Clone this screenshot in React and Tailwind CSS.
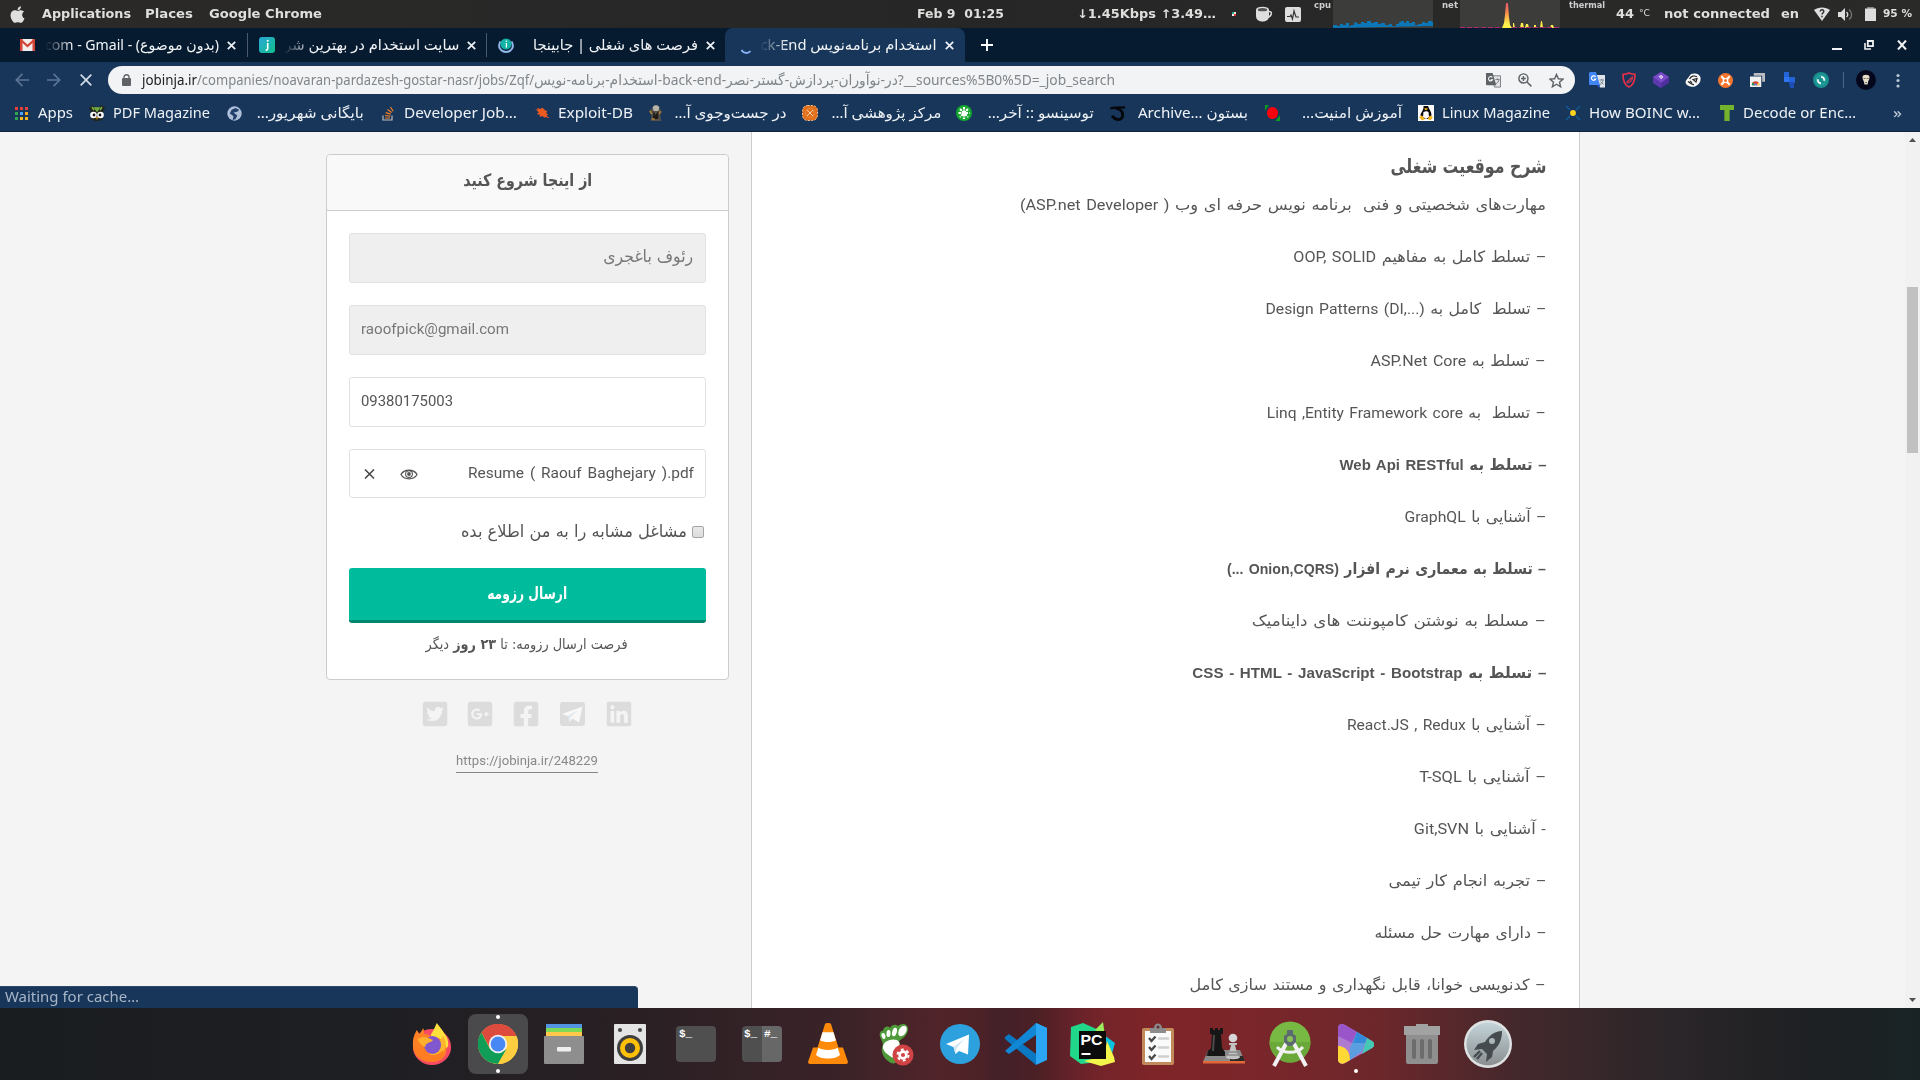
import { useLayoutEffect, useRef } from "react";
import { FaApple, FaTwitterSquare, FaGooglePlusSquare, FaFacebookSquare, FaLinkedin } from "react-icons/fa";

// Single-line label that is squeezed or stretched to the width of its box.
function Fit({ className = "", rtl = false, children }) {
  const box = useRef(null);
  const text = useRef(null);
  useLayoutEffect(() => {
    const natural = text.current.getBoundingClientRect().width;
    if (natural) text.current.style.transform = `scaleX(${box.current.clientWidth / natural})`;
  }, []);
  return (
    <div ref={box} dir={rtl ? "rtl" : "ltr"} className={`flex shrink-0 items-center ${className}`}>
      <span ref={text} className={rtl ? "block shrink-0 whitespace-pre origin-right" : "block shrink-0 whitespace-pre origin-left"}>
        {children}
      </span>
    </div>
  );
}

function Svg({ className, box = "0 0 16 16", children }) {
  return (
    <svg viewBox={box} preserveAspectRatio="none" fill="none" className={`block shrink-0 ${className}`}>
      {children}
    </svg>
  );
}

/* ---------- desktop panel ---------- */

const cpuPath =
  "M0 28V25h4v1h3v-2h3v1h3v-2h3v3h2v-1h3v-2l2-1 2 2h3v-2h3v1h3v-2h4v2h3v-1h4v2h3v-1h4v2h4v-1h3v2h4v-2h3v-2h2v-1h3v2h2v-2h3v2h3v-1h3v3h3v-1h4v-2h3v1h3v-2h4v1h2v2h3v2z";

function TopPanel() {
  return (
    <div className="flex h-7 shrink-0 items-center bg-gradient-to-r from-[#2b2a29] via-[#262626] to-[#2a2b29] text-[12px] font-bold text-[#dfdfdd]">
      <FaApple className="ml-[8px] h-[19px] w-[19px]" />
      <Fit className="ml-[15px] w-[89px]">Applications</Fit>
      <Fit className="ml-[14px] w-[48px]">Places</Fit>
      <Fit className="ml-[16px] w-[113px]">Google Chrome</Fit>
      <Fit className="ml-[595px] w-[87px]">Feb 9  01:25</Fit>
      <Fit className="ml-[73px] w-[139px]">↓1.45Kbps ↑3.49…</Fit>
      <Svg className="ml-[16px] h-1 w-1" box="0 0 4 4">
        <path d="M0 0h2v2H0z" fill="#2a8" /><path d="M2 0h2v2H2z" fill="#e8e8e8" /><path d="M2 2h2v2H2z" fill="#d33" /><path d="M0 2h2v2H0z" fill="#eee" />
      </Svg>
      <Svg className="ml-[19px] h-[16px] w-[18px]" box="0 0 18 16">
        <path d="M1 4h13v6c0 3-2 5.500-6.500 5.500S1 13 1 10z" fill="#dedede" />
        <ellipse cx="7.500" cy="3.500" rx="6.500" ry="2.800" fill="#dedede" />
        <ellipse cx="7.500" cy="3.700" rx="4.700" ry="1.600" fill="#555" />
        <path d="M13.500 5.500c4-.5 4 4-.8 6" stroke="#dedede" strokeWidth="1.500" />
      </Svg>
      <Svg className="ml-[12px] h-[15px] w-[16px]" box="0 0 16 15">
        <rect width="16" height="15" rx="2" fill="#dedede" />
        <path d="M2 9.500h3l1-1.500 1.500 4L9 4l2 6h3" stroke="#333" strokeWidth="1.200" />
      </Svg>
      <Fit className="ml-[13px] h-[10px] w-[17px] self-start text-[8.500px] text-[#cfcfcf]">cpu</Fit>
      <div className="ml-[2px] h-7 w-[100px] bg-[#3c3c3b]">
        <Svg className="h-7 w-[100px]" box="0 0 100 28"><path d={cpuPath} fill="#0b76b8" /></Svg>
      </div>
      <Fit className="ml-[9px] h-[10px] w-[16px] self-start text-[8.500px] text-[#cfcfcf]">net</Fit>
      <div className="ml-[2px] h-7 w-[100px] bg-[#3c3c3b]">
        <Svg className="h-7 w-[100px]" box="0 0 100 28">
          <defs>
            <linearGradient id="net" x1="0" y1="0" x2="0" y2="28" gradientUnits="userSpaceOnUse">
              <stop offset="0" stopColor="#d8437a" /><stop offset=".45" stopColor="#f98a4a" /><stop offset=".85" stopColor="#fdf04a" /><stop offset="1" stopColor="#fdf04a" />
            </linearGradient>
          </defs>
          <path d="M42 28l2-5 1-8 1-12h2l1 14 1 8 2 3zM53 28v-5h1l1 5zM60 28l1-5h2l1 5zM65 28l1-4h2l1 4zM74 28v-3h2v3zM80 28l1-7h1l1 7zM90 28l1-3h2l1 3z" fill="url(#net)" />
          <path d="M0 27.500h42M52 27.500h48" stroke="#b0296f" strokeWidth="1" strokeDasharray="5 2" />
        </Svg>
      </div>
      <Fit className="ml-[9px] h-[10px] w-[36px] self-start text-[8.500px] text-[#cfcfcf]">thermal</Fit>
      <Fit className="ml-[11px] w-[18px]">44</Fit>
      <Fit className="ml-[5px] w-[11px] text-[9px] font-normal">°C</Fit>
      <Fit className="ml-[14px] w-[106px]">not connected</Fit>
      <Fit className="ml-[11px] w-[18px]">en</Fit>
      <Svg className="ml-[15px] h-[14px] w-[16px]" box="0 0 16 14">
        <path d="M0 3C4-.5 12-.5 16 3L8 14z" fill="#dedede" />
        <path d="M6.200 4.500c0-2.400 3.800-2.200 3.600 0C9.700 6 8 6 8 7.500M8 8.700v1.600" stroke="#2a2a2a" strokeWidth="1.400" />
      </Svg>
      <Svg className="ml-[8px] h-[15px] w-[16px]" box="0 0 16 15">
        <path d="M0 5h3l4-4v13l-4-4H0z" fill="#dedede" />
        <path d="M8.500 5c1.500 1.500 1.500 3.500 0 5" stroke="#dedede" strokeWidth="1.300" />
        <path d="M11 2.500c3.500 2.500 3.500 7.500 0 10" stroke="#777" strokeWidth="1.300" />
      </Svg>
      <Svg className="ml-[11px] h-[14px] w-[11px]" box="0 0 11 14">
        <path d="M2.500 0h6v1.500H11V14H0V1.500h2.500z" fill="#dedede" /><path d="M2.500 0h6v1.500h-6z" fill="#888" />
      </Svg>
      <Fit className="ml-[7px] w-[29px] text-[11px]">95 %</Fit>
    </div>
  );
}

/* ---------- browser chrome ---------- */

function CloseX({ className }) {
  return (
    <Svg className={`h-[9px] w-[9px] ${className}`} box="0 0 9 9">
      <path d="M.8.8l7.400 7.400M8.200.8L.8 8.200" stroke="#eef2f6" strokeWidth="1.700" />
    </Svg>
  );
}

const fadeLeft = "[mask-image:linear-gradient(to_right,transparent_0,#000_28px)]";

function TabStrip() {
  return (
    <div className="flex h-[34px] shrink-0 items-center bg-[#071b30] text-[14.500px] text-[#f2f5f8]">
      <div className="flex h-full w-[239px] items-center pl-[20px]">
        <Svg className="h-3 w-[15px]" box="0 0 15 12">
          <rect width="15" height="12" rx="1" fill="#f3eeee" />
          <path d="M0 0h2.500v12H1a1 1 0 01-1-1zM15 0h-2.500v12H14a1 1 0 001-1z" fill="#d54337" />
          <path d="M.8 1l6.700 6 6.700-6" stroke="#d54337" strokeWidth="2.200" />
        </Svg>
        <div className={`ml-[10px] ${fadeLeft}`}><Fit className="w-[174px]">com - Gmail - (بدون موضوع)</Fit></div>
        <CloseX className="ml-[8px]" />
      </div>
      <div className="ml-[8px] h-6 w-px bg-[#4a5a6c]" />
      <div className="flex h-full w-[238px] items-center pl-[11px]">
        <Svg className="h-4 w-4">
          <defs><linearGradient id="jt" x1="0" y1="0" x2="16" y2="16" gradientUnits="userSpaceOnUse"><stop stopColor="#2aa7d8" /><stop offset="1" stopColor="#0fc08b" /></linearGradient></defs>
          <rect width="16" height="16" rx="3" fill="url(#jt)" />
          <path d="M8.700 6v5.500c0 1.200-.7 1.700-2 1.600" stroke="#fff" strokeWidth="1.600" /><circle cx="8.700" cy="3.800" r="1" fill="#fff" />
        </Svg>
        <div className={`ml-[9px] ${fadeLeft}`}><Fit rtl className="w-[175px]">سایت استخدام در بهترین شر</Fit></div>
        <CloseX className="ml-[8px]" />
      </div>
      <div className="h-6 w-px bg-[#4a5a6c]" />
      <div className="flex h-full w-[238px] items-center pl-[11px]">
        <Svg className="h-4 w-4">
          <path d="M2.500 4.500C-1 10 3 15 8 15s9-5 5.500-10.500" stroke="#8fb6ea" strokeWidth="2" />
          <circle cx="8" cy="7" r="5.600" fill="#12b3a6" />
          <path d="M8.400 6v4.500" stroke="#fff" strokeWidth="1.300" /><circle cx="8.400" cy="4.200" r=".8" fill="#fff" />
        </Svg>
        <Fit rtl className="ml-[19px] w-[165px]">فرصت های شغلی | جابینجا</Fit>
        <CloseX className="ml-[8px]" />
      </div>
      <div className="flex h-full w-[240px] items-center rounded-t-lg bg-[#18365a] pl-[16px]">
        <Svg className="mt-[12px] h-[5px] w-[10px]" box="0 0 10 5"><path d="M.5 1c2 3.500 6.500 4 9 1" stroke="#8ab4f8" strokeWidth="1.800" /></Svg>
        <div className={`ml-[9px] ${fadeLeft}`}><Fit rtl className="w-[176px]">استخدام برنامه‌نویس ck-End</Fit></div>
        <CloseX className="ml-[9px]" />
      </div>
      <Svg className="ml-[16px] h-3 w-3" box="0 0 12 12"><path d="M6 0v12M0 6h12" stroke="#fff" strokeWidth="1.900" /></Svg>
      <Svg className="mt-[8px] ml-[839px] h-[2px] w-[10px]" box="0 0 10 2"><path d="M0 0h10v2H0z" fill="#f2f2f2" /></Svg>
      <Svg className="ml-[22px] h-[10px] w-[10px]" box="0 0 10 10">
        <path d="M1 3v6h6" stroke="#f2f2f2" strokeWidth="1.600" /><path d="M3.800 1h5.200v5.200H3.800z" stroke="#f2f2f2" strokeWidth="1.800" />
      </Svg>
      <Svg className="ml-[23px] h-[10px] w-[10px]" box="0 0 10 10"><path d="M1 .5l8 9M9 .5l-8 9" stroke="#f2f2f2" strokeWidth="2" /></Svg>
    </div>
  );
}

function AddressRow() {
  return (
    <div className="flex h-9 shrink-0 items-center bg-[#18365a]">
      <Svg className="ml-[15px] h-[14px] w-[14px]"><path d="M16 8H2M8.500 1L1.500 8l7 7" stroke="#5c7596" strokeWidth="1.900" /></Svg>
      <Svg className="ml-[18px] h-[14px] w-[14px]"><path d="M0 8h14M7.500 1l7 7-7 7" stroke="#5c7596" strokeWidth="1.900" /></Svg>
      <Svg className="ml-[19px] h-[12px] w-[12px]" box="0 0 12 12"><path d="M.7.7l10.600 10.600M11.300.7L.7 11.300" stroke="#d4dce6" strokeWidth="1.700" /></Svg>
      <div className="ml-[16px] flex h-7 w-[1467px] items-center rounded-full bg-[#f1f3f4] text-[14.500px]">
        <Svg className="ml-[14px] h-[12px] w-[9px]" box="0 0 9 12">
          <rect y="4" width="9" height="8" rx="1" fill="#5f6368" /><path d="M2 4.500V3c0-3 5-3 5 0v1.500" stroke="#5f6368" strokeWidth="1.300" />
        </Svg>
        <Fit className="ml-[11px] w-[55px] text-[#202124]">jobinja.ir</Fit>
        <Fit className="w-[337px] text-[#80868b]">/companies/noavaran-pardazesh-gostar-nasr/jobs/Zqf/</Fit>
        <Fit className="w-[581px] text-[#80868b]">استخدام-برنامه-نویس-back-end-در-نوآوران-پردازش-گستر-نصر?__sources%5B0%5D=_job_search</Fit>
        <Svg className="ml-[371px] h-[15px] w-[15px]">
          <path d="M7 3h8.500v12H9z" fill="#e4e6e8" stroke="#777c82" />
          <path d="M0 0h7l4 13H1a1 1 0 01-1-1z" fill="#5f6368" />
          <path d="M6.800 4.700A2.300 2.300 0 107 7.300H5" stroke="#fff" strokeWidth="1.100" />
          <path d="M10 7h4.500M12.300 5.500V7M13.800 7c0 2-1.500 3.500-3 4.500" stroke="#777c82" />
        </Svg>
        <Svg className="ml-[17px] h-[14px] w-[14px]">
          <circle cx="6.200" cy="6.200" r="5.200" stroke="#5f6368" strokeWidth="1.700" /><path d="M10 10l5.300 5.300M3.500 6.200H9M6.200 3.500V9" stroke="#5f6368" strokeWidth="1.700" />
        </Svg>
        <Svg className="ml-[17px] h-[15px] w-[15px]">
          <path d="M8 1.500l2 4.600 5 .4-3.800 3.300 1.200 4.900L8 12l-4.400 2.700 1.200-4.900L1 6.500l5-.4z" stroke="#5f6368" strokeWidth="1.500" />
        </Svg>
      </div>
      <Svg className="ml-[14px] h-4 w-4">
        <path d="M7 3h9v12.500h-5z" fill="#dfe4ea" /><path d="M1 0h6l4 13H1a1 1 0 01-1-1V1z" fill="#4285f4" /><path d="M8 13h3l-1 3z" fill="#2a56c6" />
        <path d="M6.500 4.800A2.200 2.200 0 106.700 7H5" stroke="#fff" strokeWidth="1.200" /><path d="M10.500 8H15M12.700 7v1M14 8c0 2-1.500 3.500-3 4.500M11.500 9.500l3 3" stroke="#7d8894" />
      </Svg>
      <Svg className="ml-[17px] h-4 w-[14px]" box="0 0 14 16">
        <path d="M7 1c2 1 4 1.400 6 1.400C13 9 11.500 13 7 15 2.500 13 1 9 1 2.400 3 2.400 5 2 7 1z" stroke="#e5304b" strokeWidth="1.700" /><path d="M4.500 10.500L11 4.500M5 11c3-.5 5-2.500 5.500-5" stroke="#e5304b" strokeWidth="1.100" />
      </Svg>
      <Svg className="ml-[17px] h-4 w-4">
        <path d="M8 0l8 5v6l-8 5-8-5V5z" fill="#4f2d9c" /><path d="M8 0l8 5-8 6-8-6z" fill="#7a4bc8" /><path d="M8 11v5l-8-5V5z" fill="#5e38ad" /><path d="M6 4.500l2-1 2 1.500-2 1.500zM8 3.500V6.500" stroke="#e9defa" />
      </Svg>
      <Svg className="ml-[16px] h-[15px] w-4">
        <path d="M6 1c4-1.500 9 0 9.500 4 .5 4-1 7-5 9-3 1.500-5 .5-7-.5S0 11 1 8z" fill="#f6f6f6" /><path d="M4.500 6.500C6 3 9 2.500 12 4M3 9c2 2 4 3.500 6 3.500M8 7l4-1-1 3.500zM5 8.500l2 2" stroke="#222" strokeWidth="1.200" />
      </Svg>
      <Svg className="ml-[17px] h-[15px] w-[15px]">
        <circle cx="8" cy="8" r="8" fill="#f4742b" /><path d="M3.500 3.500l9 9M12.500 3.500l-9 9" stroke="#fff" strokeWidth="2.200" /><path d="M5 5.500h6v5H5z" fill="#fff" /><circle cx="8" cy="8" r="1.600" fill="#f4742b" />
      </Svg>
      <Svg className="ml-[17px] h-[14px] w-[15px]">
        <path d="M4 0h12v10h-3V3H4z" fill="#b9bdc2" /><path d="M0 4h12v12H0z" fill="#f1f1f1" />
        <path d="M2 14a4 4.500 0 018 0z" fill="#db4437" /><path d="M2 14c0-2 .5-3 1-3.500l2 3.500z" fill="#0f9d58" /><path d="M10 14c0-2-.5-3-1-3.500L7 14z" fill="#ffcd40" /><path d="M4.500 14a1.500 2 0 013 0z" fill="#4285f4" />
      </Svg>
      <Svg className="ml-[19px] h-4 w-[11px]" box="0 0 11 16"><path d="M0 0h5v5h6v6H6L5 10H0z" fill="#2563d9" /><path d="M5 10h5v6H6z" fill="#1d4fb4" /><path d="M0 5h5v5H0z" fill="#2f74f0" /></Svg>
      <Svg className="ml-[18px] h-4 w-4"><circle cx="8" cy="8" r="8" fill="#17908f" /><circle cx="8" cy="8" r="4.700" stroke="#35aaa6" /><path d="M8 4.800c2.500 0 3.500 2 3 4M8 11.200c-2.500 0-3.500-2-3-4" stroke="#fff" strokeWidth="1.700" /></Svg>
      <div className="ml-[14px] h-4 w-px bg-[#4d6684]" />
      <Svg className="ml-[12px] h-5 w-5" box="0 0 20 20"><circle cx="10" cy="10" r="10" fill="#04061c" /><path d="M6.500 7c0-3 7-3 7 0 0 2.500-.8 3-1.300 4.500l-.7 3h-3l-.7-3C7.300 10 6.500 9.500 6.500 7z" fill="#e5dcc8" /><path d="M7.500 8.500h2M10.700 8.500h2M9 12.500h2" stroke="#77705f" /></Svg>
      <Svg className="ml-[20px] h-[15px] w-[4px]" box="0 0 4 15"><circle cx="2" cy="2.500" r="1.600" fill="#b9c6d6" /><circle cx="2" cy="7.500" r="1.600" fill="#b9c6d6" /><circle cx="2" cy="13" r="1.600" fill="#b9c6d6" /></Svg>
    </div>
  );
}

function BookmarksRow() {
  return (
    <div className="flex h-[34px] shrink-0 items-center border-b border-[#0e2340] bg-[#18365a] pb-[3px] text-[14.500px] text-[#eef2f6]">
      <Svg className="ml-[15px] h-[13px] w-[13px]" box="0 0 13 13">
        <path d="M0 0h3v3H0zM5 0h3v3H5zM10 0h3v3h-3z" fill="#e8403a" /><path d="M0 5h3v3H0z" fill="#2fa84f" /><path d="M5 5h3v3H5z" fill="#4da3ff" /><path d="M10 5h3v3h-3z" fill="#f5a623" /><path d="M0 10h3v3H0z" fill="#2fa84f" /><path d="M5 10h3v3H5zM10 10h3v3h-3z" fill="#f5b823" />
      </Svg>
      <Fit className="ml-[10px] w-[35px]">Apps</Fit>
      <Svg className="ml-[16px] h-4 w-4">
        <path d="M0 3l3-3 3 2h4l3-2 3 3-2 4v7l-4 2H6l-4-2V7z" fill="#20251d" /><path d="M3 2l2 3M13 2l-2 3M6 3h4l-2 3z" stroke="#7ab648" strokeWidth="1.500" /><circle cx="4.500" cy="10" r="3.300" fill="#fff" /><circle cx="11.500" cy="10" r="3.300" fill="#fff" /><circle cx="5" cy="10" r="1.400" fill="#111" /><circle cx="11" cy="10" r="1.400" fill="#111" /><path d="M7 12h2l-1 3z" fill="#f2a51e" />
      </Svg>
      <Fit className="ml-[8px] w-[97px]">PDF Magazine</Fit>
      <Svg className="ml-[17px] h-[15px] w-[15px]"><circle cx="8" cy="8" r="7.700" fill="#aebfda" /><path d="M9 2l4 2-2 2-4 1 4 3-2 4-3 1 1-4-4-3 2-4z" fill="#23426b" /></Svg>
      <Fit rtl className="ml-[15px] w-[107px]">بایگانی شهریور…</Fit>
      <Svg className="ml-[18px] h-[15px] w-[12px]" box="0 0 12 15"><path d="M1 9.500V14h9V9.500" stroke="#bcbbbb" strokeWidth="1.200" /><path d="M3 12h5M3 9.500l5.200.6M3.700 6.600l5 1.500M5.500 3.500l4.200 3M8.500 1l2.700 4.200" stroke="#f48024" strokeWidth="1.200" /></Svg>
      <Fit className="ml-[10px] w-[113px]">Developer Job…</Fit>
      <Svg className="ml-[18px] h-[14px] w-[15px]"><path d="M0 3l3 1.500L2.500 2l3 1.500L8 2l2.500 2.500L13 6l-1 2 2 2-2 .500L15.500 14 11 12.500l-1 1-2-2-3 1 .5-2.500L2 9.500 4 7z" fill="#ef5a22" /></Svg>
      <Fit className="ml-[8px] w-[75px]">Exploit-DB</Fit>
      <Svg className="ml-[15px] h-[16px] w-[15px]"><path d="M5 3c0-4 7-4 7 0l3 4-2 3 1 6H3l1-6-3-4z" fill="#565249" /><path d="M5 2.500C6-.5 11-.5 12 2.500L11 6H6z" fill="#b7b4ac" /><path d="M6 6l2 4 3-4v8H5z" fill="#1f1c18" /><path d="M2 6l2 3M13 6l-1 3M4 14h3" stroke="#b88434" strokeWidth="1.400" /></Svg>
      <Fit rtl className="ml-[11px] w-[112px]">در جست‌وجوی آ…</Fit>
      <Svg className="ml-[16px] h-4 w-4"><rect x=".5" y=".5" width="15" height="15" rx="5" fill="#e0701c" stroke="#f2c79d" strokeDasharray="2 1.500" /><path d="M5 5l6 6M11 5l-6 6" stroke="#f7cfa6" /><circle cx="8" cy="8" r="4.500" stroke="#e98a40" strokeWidth=".8" /></Svg>
      <Fit rtl className="ml-[13px] w-[110px]">مرکز پژوهشی آ…</Fit>
      <Svg className="ml-[15px] h-4 w-4"><circle cx="8" cy="8" r="8" fill="#14a82e" /><path d="M8 2v12M2.500 8h11M4 4l8 8M12 4l-8 8" stroke="#fff" strokeWidth="2.200" strokeDasharray="2.500 1" /><circle cx="8" cy="8" r="2.500" fill="#fff" /></Svg>
      <Fit rtl className="ml-[16px] w-[106px]">توسینسو :: آخر…</Fit>
      <Svg className="ml-[16px] h-[15px] w-4"><path d="M1 3.500C1 1 4 2 15 1.500" stroke="#05070a" strokeWidth="2.400" /><path d="M6 2.500c9 2 8 12 2.500 12-3 0-5-2-6.500-4" stroke="#05070a" strokeWidth="2.800" /></Svg>
      <Fit rtl className="ml-[12px] w-[110px]">بستون …Archive</Fit>
      <Svg className="ml-[17px] h-4 w-[15px]"><path d="M0 0h4L0 6zM16 10v6h-5z" fill="#0e9a26" /><circle cx="8" cy="8" r="6" fill="#f5060c" /></Svg>
      <Fit rtl className="ml-[22px] w-[100px]">آموزش امنیت…</Fit>
      <Svg className="ml-[16px] h-4 w-4"><path d="M0 0h16v16H0z" fill="#fff" /><path d="M5.500 1h4.500c1 3 3.500 6 3.500 9l-1.500 4H4l-1.500-4C3 7 6 5 5.500 1z" fill="#0a0a0a" /><path d="M5.500 7c2-1 4-1 5 0l.5 5-3 2-3-2z" fill="#fff" /><path d="M6 3.800l2-.8 2 .8-2 1.700zM1 12l3-1.500L7 14l-3 1.500zM15 12l-3-1.500L9.500 14l3 1.500z" fill="#f5b51c" /></Svg>
      <Fit className="ml-[8px] w-[108px]">Linux Magazine</Fit>
      <Svg className="ml-[15px] h-4 w-4"><path d="M1 1l4 4M15 1l-4 4M1 15l4-4M15 15l-4-4" stroke="#125a94" strokeWidth="1.500" /><circle cx="8" cy="8" r="2.900" fill="#ffd21e" /></Svg>
      <Fit className="ml-[8px] w-[111px]">How BOINC w…</Fit>
      <Svg className="ml-[20px] h-4 w-[14px]"><path d="M0 0h16v5h-5v11H5V5H0z" fill="#74b42c" /></Svg>
      <Fit className="ml-[9px] w-[113px]">Decode or Enc…</Fit>
      <Fit className="ml-[37px] w-[9px] text-[#c3cedb]">»</Fit>
    </div>
  );
}

/* ---------- job page ---------- */

const roboto = "font-['Roboto','DejaVu_Sans',sans-serif]";
const arialBold = "font-['Liberation_Sans','DejaVu_Sans',sans-serif] font-bold";

const lines = [
  { w: "w-[526px]", t: "مهارت‌های شخصیتی و فنی  برنامه نویس حرفه ای وب ( ASP.net Developer)" },
  { w: "w-[253px]", t: "– تسلط کامل به مفاهیم OOP, SOLID" },
  { w: "w-[281px]", t: "– تسلط  کامل به Design Patterns (DI,...)" },
  { w: "w-[175px]", t: "– تسلط به ASP.Net Core" },
  { w: "w-[279px]", t: "– تسلط  به Linq ,Entity Framework core" },
  { w: "w-[207px]", t: "– تسلط به Web Api RESTful", bold: true },
  { w: "w-[142px]", t: "– آشنایی با GraphQL" },
  { w: "w-[319px]", t: "– تسلط به معماری نرم افزار (Onion,CQRS ...)", bold: true },
  { w: "w-[294px]", t: "– مسلط به نوشتن کامپوننت های داینامیک" },
  { w: "w-[354px]", t: "– تسلط به CSS - HTML - JavaScript - Bootstrap", bold: true },
  { w: "w-[199px]", t: "– آشنایی با React.JS , Redux" },
  { w: "w-[127px]", t: "– آشنایی با T-SQL" },
  { w: "w-[132px]", t: "- آشنایی با Git,SVN" },
  { w: "w-[158px]", t: "– تجربه انجام کار تیمی" },
  { w: "w-[172px]", t: "– دارای مهارت حل مسئله" },
  { w: "w-[356px]", t: "– کدنویسی خوانا، قابل نگهداری و مستند سازی کامل" },
];

function JobDescription() {
  return (
    <div dir="rtl" className="ml-[22px] w-[829px] shrink-0 overflow-hidden border-x border-[#ccc] bg-white pr-[33px] text-[#555]">
      <div className="flex h-[47px] items-end pb-px">
        <Fit rtl className="w-[156px] text-[20px] leading-6 font-bold">شرح موقعیت شغلی</Fit>
      </div>
      {lines.map((l) => (
        <div key={l.t} className={`flex h-[52px] items-center ${l.bold ? "" : "pt-[2px]"}`}>
          <Fit rtl className={`${l.w} text-[15.500px] [word-spacing:1.500px] ${l.bold ? arialBold : roboto}`}>{l.t}</Fit>
        </div>
      ))}
    </div>
  );
}

function ApplyCard() {
  return (
    <div className="ml-[326px] w-[403px] shrink-0 pt-[22px]">
      <div className="h-[526px] rounded border border-[#ccc] bg-white text-[#555]">
        <div className="flex h-[56px] items-center justify-center rounded-t border-b border-[#ccc] bg-[#f9f9f9] pb-[3px]">
          <Fit rtl className="w-[129px] text-[17px] font-bold">از اینجا شروع کنید</Fit>
        </div>
        <div className="px-[22px] pt-[22px]">
          <div className="flex h-[50px] items-center justify-end rounded-[3px] border border-[#e2e2e2] bg-[#efefef] pr-[12px] pb-[2px] text-[#777]">
            <Fit rtl className="w-[90px] text-[17px]">رئوف باغجری</Fit>
          </div>
          <div className={`mt-[22px] flex h-[50px] items-center rounded-[3px] border border-[#e2e2e2] bg-[#efefef] pb-[1px] pl-[11px] text-[#777] ${roboto}`}>
            <Fit className="w-[148px] text-[15px]">raoofpick@gmail.com</Fit>
          </div>
          <div className={`mt-[22px] flex h-[50px] items-center rounded-[3px] border border-[#e2e2e2] pb-[1px] pl-[11px] ${roboto}`}>
            <Fit className="w-[92px] text-[15px]">09380175003</Fit>
          </div>
          <div className={`mt-[22px] flex h-[49px] items-center rounded-[3px] border border-[#e2e2e2] pl-[14px] ${roboto}`}>
            <Svg className="mt-px h-[10px] w-[11px]" box="0 0 11 10"><path d="M1 .5l9 9M10 .5l-9 9" stroke="#444" strokeWidth="1.500" /></Svg>
            <Svg className="ml-[25px] mt-px h-[11px] w-[18px]" box="0 0 18 11">
              <path d="M1 5.500C4-.2 14-.2 17 5.500 14 11.200 4 11.200 1 5.500z" stroke="#555" strokeWidth="1.300" /><circle cx="9" cy="5" r="3.400" stroke="#555" strokeWidth="1.100" /><circle cx="9" cy="5" r="1.900" fill="#555" />
            </Svg>
            <Fit className="mb-[1px] ml-[50px] w-[226px] text-[15px] [word-spacing:2px]">Resume ( Raouf Baghejary ).pdf</Fit>
          </div>
          <div className="mt-[15px] flex h-[38px] items-center justify-end">
            <Fit rtl className="w-[226px] text-[17px]">مشاغل مشابه را به من اطلاع بده</Fit>
            <div className="mr-[2px] ml-[5px] h-[12px] w-[12px] rounded-[2px] border border-[#a5a5a5] bg-gradient-to-b from-[#e9e9e9] to-[#dcdcdc]" />
          </div>
          <div className="mt-[17px] flex h-[55px] items-center justify-center rounded-[3px] border-b-[3px] border-[#00876d] bg-[#00bb9c] text-white">
            <Fit rtl className="w-[80px] text-[16.500px] font-bold">ارسال رزومه</Fit>
          </div>
          <div className="mt-[8px] flex h-7 items-center justify-center">
            <Fit rtl className="mr-[1px] w-[202px] text-[14.500px]">فرصت ارسال رزومه: تا <b>۲۳ روز</b> دیگر</Fit>
          </div>
        </div>
      </div>
      <div className="mt-[22px] ml-[96px] flex h-6 items-center text-[#dcdcdc]">
        <FaTwitterSquare className="-mx-px h-7 w-7" />
        <FaGooglePlusSquare className="ml-[18px] h-7 w-7" />
        <FaFacebookSquare className="ml-[18px] h-7 w-7" />
        <Svg className="ml-[20px] h-6 w-[25px]" box="0 0 25 24">
          <rect width="25" height="24" rx="3" fill="#dcdcdc" /><path d="M2 12L22.500 4.500 19 20.500 12.500 16.500 9.500 20 7.500 14z" fill="#f8f8f8" /><path d="M7.500 14L18 8l-8 7.500-.5 4.500z" fill="#dfe8ee" />
        </Svg>
        <FaLinkedin className="ml-[20px] h-7 w-7" />
      </div>
      <div className={`mt-[23px] flex justify-center text-[#888] ${roboto}`}>
        <div className="mr-px h-[24px] border-b border-[#888]"><Fit className="h-[23px] w-[142px] text-[13px]">https://jobinja.ir/248229</Fit></div>
      </div>
    </div>
  );
}

function PageView() {
  return (
    <div className="relative flex h-[876px] shrink-0 overflow-hidden bg-[#f4f4f4]">
      <ApplyCard />
      <JobDescription />
      <div className="ml-auto flex w-[15px] flex-col items-center bg-[#f1f1f1] py-[6px]">
        <Svg className="h-[4px] w-[7px]" box="0 0 7 4"><path d="M0 4L3.500 0 7 4z" fill="#505050" /></Svg>
        <div className="mt-[145px] h-[166px] w-[11px] bg-[#c1c1c1]" />
        <Svg className="mt-auto h-[4px] w-[7px]" box="0 0 7 4"><path d="M0 0h7L3.500 4z" fill="#505050" /></Svg>
      </div>
      <div className="absolute bottom-0 left-0 flex h-[22px] w-[638px] items-center rounded-tr border-t border-[#2c4868] bg-[#18365a] pb-[2px] pl-[5px] text-[14px] text-[#a7b5c6] font-['Noto_Sans',sans-serif]">
        <Fit className="w-[134px]">Waiting for cache…</Fit>
      </div>
    </div>
  );
}

/* ---------- dock ---------- */

function DockItem({ children, active, dot }) {
  return (
    <div className="flex w-[66px] justify-center">
      <div className={`relative flex h-[60px] w-[60px] items-center justify-center rounded-lg ${active ? "bg-[#4a494b]" : ""}`}>
        {active && <div className="absolute top-px left-[28px] h-[4px] w-[4px] rounded-full bg-white" />}
        {children}
        {(active || dot) && <div className="absolute bottom-px left-[28px] h-[4px] w-[4px] rounded-full bg-white" />}
      </div>
    </div>
  );
}

function Dock() {
  return (
    <div className="flex h-[72px] shrink-0 items-center bg-[linear-gradient(90deg,#1a1d20_0%,#1e1f23_20%,#2b2024_34%,#3b2328_44%,#51242a_49%,#4d2227_51%,#43202a_52%,#4b2024_54%,#68222a_56%,#752429_57.500%,#7f2529_60.500%,#79262a_66%,#6c272b_72%,#43282c_79%,#2b2629_87%,#1e2023_94%,#192325_100%)] pb-px pl-[399px]">
      <DockItem>
        <Svg className="-ml-px h-11 w-[42px]" box="0 0 44 44">
          <ellipse cx="22" cy="25" rx="20" ry="18" fill="#f74a62" />
          <path d="M21 12c2-2 4-7 6-11 4 5 6 7 9 12 2 2 3 5 3 11L31 33 21 24z" fill="#ffe03c" />
          <path d="M2 22C2 15 4 12 6 8l3 4 4-6 1 6c3 0 6 1 8 3 9-1 15 6 15 13 0 7-6 12-15 12C9 40 2 32 2 22z" fill="#ff8125" />
          <path d="M34 14c4 6 3 15-3 19-4 2-8 2-12 0z" fill="#ffb52c" />
          <circle cx="22.500" cy="23" r="9" fill="#8157cf" />
          <path d="M7 17c5-3 11-2 16 1-2 3-8 2-8 7-3-1-6-3-8-8z" fill="#ffb02c" />
          <path d="M2 22c2 5 8 5 12 4 1 8 12 10 20 2-1 8-6 12-12 12C9 40 2 33 2 22z" fill="#ff7d22" />
        </Svg>
      </DockItem>
      <DockItem active>
        <Svg className="h-10 w-10" box="0 0 40 40">
          <circle cx="20" cy="20" r="20" fill="#ffcd40" />
          <path d="M3.500 8.700A20 20 0 0138.500 12H20l-8 12z" fill="#dd4b3e" />
          <path d="M3.500 8.700A20 20 0 0020 40l8.500-15-8.500 4-8-4z" fill="#0f9d58" />
          <path d="M38.500 12A20 20 0 0120 40l9-15.500-2-12.500z" fill="#ffcd40" />
          <circle cx="20" cy="20" r="9.200" fill="#f1f1f1" /><circle cx="20" cy="20" r="7.400" fill="#4788f4" />
        </Svg>
      </DockItem>
      <DockItem>
        <Svg className="h-10 w-10" box="0 0 40 40">
          <path d="M2 0h36v5H2z" fill="#5294e2" /><path d="M2 4h36v5H2z" fill="#7ed957" /><path d="M2 8h36v5H2z" fill="#ffc84a" /><rect y="12" width="40" height="28" rx="1" fill="#8e8e8e" /><rect x="13" y="23" width="14" height="4.500" rx="1" fill="#efefef" />
        </Svg>
      </DockItem>
      <DockItem>
        <Svg className="h-10 w-8" box="0 0 32 40">
          <rect width="32" height="40" rx="1" fill="#e4e4e4" /><circle cx="6" cy="6" r="2.100" fill="#444" /><circle cx="26" cy="6" r="2.100" fill="#444" /><circle cx="16" cy="24" r="13" fill="#3e3e3e" /><circle cx="16" cy="24" r="10" fill="#ffc107" /><circle cx="16" cy="24" r="5.200" fill="#3e3e3e" />
        </Svg>
      </DockItem>
      <DockItem>
        <div className="h-9 w-10 rounded-sm bg-[#4f4f4f] pt-px pl-[3px] font-['Liberation_Mono',monospace] text-[11px] leading-[14px] font-bold text-white">$_</div>
      </DockItem>
      <DockItem>
        <div className="flex h-9 w-10 rounded-sm bg-[#4f4f4f] font-['Liberation_Mono',monospace] text-[11px] leading-[14px] font-bold text-white">
          <div className="w-5 pt-px pl-[2px]">$_</div>
          <div className="w-5 rounded-r-sm bg-[#676767] pt-px pl-[2px]">#_</div>
        </div>
      </DockItem>
      <DockItem>
        <Svg className="h-[41px] w-10" box="0 0 40 40">
          <path d="M5 24h30l5 14a2 2 0 01-2 2H2a2 2 0 01-2-2z" fill="#ff8a0a" />
          <path d="M17 1c1-1.300 5-1.300 6 0l9 28c-4 7-20 7-24 0z" fill="#ff8a0a" />
          <path d="M14.500 9h11l2.500 8c-4 2-12 2-16 0zM10.500 24h19l2.500 7c-4 5-20 5-24 0z" fill="#fff" />
          <path d="M12 17c4 2 12 2 16 0l2 7c-4 3-16 3-20 0z" fill="#ff8a0a" />
        </Svg>
      </DockItem>
      <DockItem>
        <Svg className="ml-[5px] h-11 w-11" box="0 0 44 44">
          <path d="M6 17c-3-6 0-9 2-8 0-4 5-6 7-3 2-4 6-4 8-2 3-3 10-3 10 3 0 5-4 9-9 12 2 5 3 9 0 17-1 6-7 7-11 3C8 35 5 29 8 22z" fill="#4e9a3b" />
          <ellipse cx="8.500" cy="14" rx="1.900" ry="3" fill="#fff" transform="rotate(-15 8.500 14)" /><ellipse cx="13.500" cy="11.500" rx="2" ry="3.600" fill="#fff" transform="rotate(5 13.500 11.500)" /><ellipse cx="19.500" cy="10" rx="2.300" ry="4.300" fill="#fff" transform="rotate(15 19.500 10)" /><ellipse cx="27.500" cy="9" rx="3.700" ry="5.700" fill="#fff" transform="rotate(30 27.500 9)" />
          <path d="M8 25c0-7 13-10 16-5 2 5-3 7-2 11 0 5-4 6-7 3-4-3-7-5-7-9z" fill="#fff" />
          <circle cx="28" cy="33" r="10.500" fill="#d04344" />
          <circle cx="28" cy="33" r="3.400" stroke="#fff" strokeWidth="2.600" /><circle cx="28" cy="33" r="5.500" stroke="#fff" strokeWidth="2" strokeDasharray="2.900 2.860" />
        </Svg>
      </DockItem>
      <DockItem>
        <Svg className="h-10 w-10" box="0 0 40 40"><circle cx="20" cy="20" r="20" fill="#2ca1de" /><path d="M6 20L29 10.500 28 30.500 19 27 15.500 30 13.500 23z" fill="#fff" /><path d="M13.500 23L24 15l-7.500 9.500-1 5.500z" fill="#d2e6f3" /></Svg>
      </DockItem>
      <DockItem>
        <Svg className="h-[42px] w-[42px]" box="0 0 42 42">
          <path d="M31 0l11 5v32l-11 5z" fill="#2aa6f4" /><path d="M0 14l4-3 27 20v11L0 16z" fill="#0a78c2" /><path d="M0 28l31-28v12L4 31 0 28z" fill="#1287d6" /><path d="M31 0l11 5-11 8z" fill="#2aa6f4" />
        </Svg>
      </DockItem>
      <DockItem>
        <Svg className="h-11 w-[45px]" box="0 0 45 44">
          <path d="M1 5l12-4 18 8 5 30-25 3L0 34z" fill="#21d789" /><path d="M25 8l8-8 2 14z" fill="#9bec5a" /><path d="M34 13l11 8-4 14z" fill="#0bc3e0" /><path d="M37 19l7 16 1 5-14 4-17-5 20-5z" fill="#f3f54b" />
          <rect x="9" y="9" width="27" height="28" fill="#0b0b0b" />
          <path d="M11.500 33h9v-2h-9z" fill="#fff" />
          <text x="10.500" y="23" fontFamily="Liberation Sans" fontWeight="700" fontSize="15.500" fill="#fff" textLength="22" lengthAdjust="spacingAndGlyphs">PC</text>
        </Svg>
      </DockItem>
      <DockItem>
        <Svg className="h-[42px] w-8" box="0 0 32 42">
          <rect y="5" width="32" height="37" rx="2" fill="#c18a5a" /><path d="M3 8h26v31H3z" fill="#fafafa" /><path d="M8 5h4c0-6 8-6 8 0h4v5H8z" fill="#8c8c8c" /><circle cx="16" cy="4" r="1.500" fill="#5d3033" />
          <path d="M7 15l2.500 3 4-4.500M7 24l2.500 3 4-4.500M7 33l2.500 3 4-4.500" stroke="#4a4a4a" strokeWidth="2.400" /><path d="M17 15.500h9M17 24.500h9M17 33.500h9" stroke="#cfcfcf" strokeWidth="2.600" strokeLinecap="round" />
        </Svg>
      </DockItem>
      <DockItem>
        <Svg className="mt-[3px] h-[38px] w-[42px]" box="0 0 42 38">
          <path d="M5 24h32l5 12H0z" fill="#8a8a8a" /><path d="M5 24h13l-1 6H3zM27 30h13l2 6H27z" fill="#292929" /><path d="M0 35h42v2.500H0z" fill="#e2683a" />
          <path d="M7 2h3v2h2V2h3v2h2V2h3v6h-2l1 14 3 4v4H5v-4l3-4 1-14H7z" fill="#161616" /><path d="M10 9h2l-1 16H9z" fill="#4b4b4b" />
          <circle cx="30" cy="12" r="4.300" fill="#d6d6d6" /><path d="M26 17h8v2h-2l2 8 3 4c0 3-14 3-14 0l3-4 2-8h-2z" fill="#c2c2c2" /><path d="M24 29h12M26 26h8" stroke="#6f6f6f" />
        </Svg>
      </DockItem>
      <DockItem>
        <Svg className="h-[46px] w-[42px]" box="0 0 42 46">
          <circle cx="21" cy="21" r="20.500" fill="#78b943" /><path d="M.5 21a20.500 20.500 0 0041 0z" fill="#6aa83a" />
          <path d="M19 19L5 45M23 19l14 26" stroke="#f1f1f1" strokeWidth="4" /><path d="M8 26c6 7 20 7 26 0" stroke="#f1f1f1" strokeWidth="3" />
          <path d="M18 9h6v4l3 2v6l-4 4h-4l-4-4v-6l3-2z" fill="#5c6b70" /><circle cx="21" cy="18" r="3" fill="#8bbf59" />
        </Svg>
      </DockItem>
      <DockItem dot>
        <Svg className="h-10 w-9" box="0 0 36 40">
          <path d="M0 4c0-4 4-5 7-3l27 16c3 2 3 5 0 7L7 39c-3 2-7 0-7-3z" fill="#ad7bd0" />
          <path d="M0 4c0-4 4-5 7-3l12 7-5 11L0 12z" fill="#9a56c8" />
          <path d="M19 8l10 6-5 13-12 9V24z" fill="#5a9fe0" /><path d="M19 8l10 6-2 5-12 0z" fill="#3489d8" />
          <path d="M29 14l5 3c3 2 3 5 0 7l-10 6z" fill="#43c9b4" />
          <path d="M0 22c7 0 12 5 12 14l-5 3c-3 2-7 0-7-3z" fill="#ffd836" />
        </Svg>
      </DockItem>
      <DockItem>
        <Svg className="h-10 w-9" box="0 0 36 40"><path d="M0 2h12V0h12v2h12v9H0z" fill="#a2a2a2" /><path d="M2 11h32v27a2 2 0 01-2 2H4a2 2 0 01-2-2z" fill="#8f8f8f" /><path d="M10 17v16M18 17v16M26 17v16" stroke="#6c6c6c" strokeWidth="4" strokeLinecap="round" /></Svg>
      </DockItem>
      <DockItem>
        <Svg className="h-12 w-12" box="0 0 48 48">
          <defs><linearGradient id="rk" x1="0" y1="0" x2="0" y2="1"><stop stopColor="#c4d4da" /><stop offset="1" stopColor="#8a8f90" /></linearGradient></defs>
          <circle cx="24" cy="24" r="24" fill="#dfe2e2" /><circle cx="24" cy="24" r="21.500" fill="url(#rk)" />
          <path d="M38 11c-8 0-13 5-17 11l-7 2-4 6 8-1 5 5-1 8 6-5 1-6c6-5 9-11 9-20z" fill="#454b4e" /><circle cx="28" cy="21" r="3" fill="#aab6ba" /><path d="M10 37l6-6M13 39l5-6" stroke="#454b4e" strokeWidth="2.400" />
        </Svg>
      </DockItem>
    </div>
  );
}

export default function App() {
  return (
    <div className="flex h-[1080px] w-[1920px] flex-col overflow-hidden font-['DejaVu_Sans',sans-serif]">
      <TopPanel />
      <div className="flex shrink-0 flex-col font-['Noto_Sans','DejaVu_Sans',sans-serif]">
        <TabStrip />
        <AddressRow />
        <BookmarksRow />
      </div>
      <PageView />
      <Dock />
    </div>
  );
}
